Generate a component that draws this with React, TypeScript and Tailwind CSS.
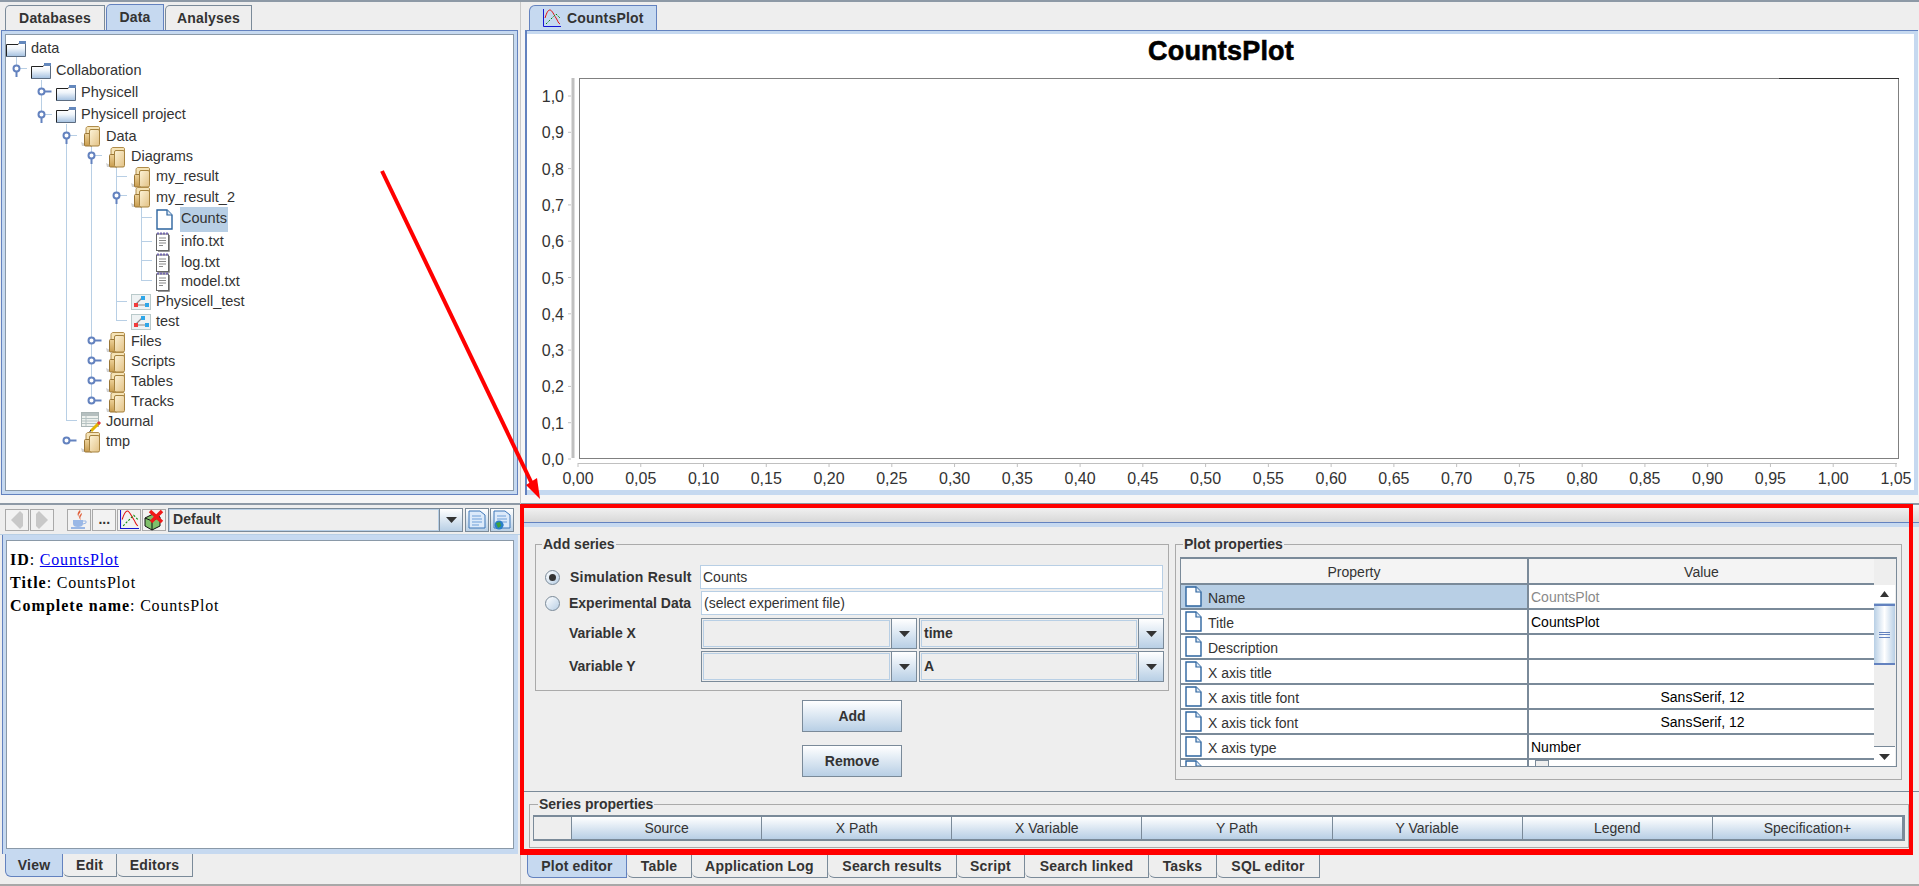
import { ReactNode } from "react";

// Metal Ocean colours: #6382bf #7a8a99 #b8cfe5 #c6d9f0 #eeeeee
const FolderBlue = () => (
  <svg width="20" height="16" viewBox="0 0 20 16">
    <defs>
      <linearGradient id="fb" x1="0" y1="0" x2="0" y2="1">
        <stop offset="0" stopColor="#ffffff" />
        <stop offset="0.35" stopColor="#eef4fa" />
        <stop offset="1" stopColor="#a3c0e0" />
      </linearGradient>
    </defs>
    <rect x="0.5" y="3.5" width="19" height="12" fill="url(#fb)" />
    <path d="M0.5 15.5V3.5H12L14 1.5" fill="none" stroke="#222" strokeWidth="1" />
    <rect x="13" y="0" width="7" height="3" fill="#6488bd" />
    <path d="M0 15.5H19.5V3" fill="none" stroke="#5c6c80" />
  </svg>
);

const FolderTan = () => (
  <svg width="20" height="21" viewBox="0 0 20 21">
    <defs>
      <linearGradient id="ft" x1="0" y1="0" x2="1" y2="1">
        <stop offset="0" stopColor="#fdf3d8" />
        <stop offset="1" stopColor="#e2c184" />
      </linearGradient>
      <linearGradient id="ft2" x1="0" y1="0" x2="0" y2="1">
        <stop offset="0" stopColor="#edd29a" />
        <stop offset="1" stopColor="#c89c4e" />
      </linearGradient>
    </defs>
    <path d="M0 16L4 18V20H1Z" fill="#cfcfcf" />
    <path d="M5 8V2.5C5 1.5 6 0.5 7 0.5H17C18 0.5 18.5 1 18.5 2V18" fill="#f5e3b6" stroke="#b08c4a" />
    <rect x="3.5" y="7.5" width="8" height="12.5" rx="1" fill="url(#ft2)" stroke="#9a7636" />
    <rect x="8.5" y="3.5" width="10" height="16.5" rx="1.5" fill="url(#ft)" stroke="#a5823f" />
  </svg>
);

const DocIcon = () => (
  <svg width="17" height="21" viewBox="0 0 17 21">
    <path d="M1 1H11L16 6V20H1Z" fill="#fff" stroke="#2d649f" strokeWidth="1.4" />
    <path d="M11 1V6H16" fill="#dfe9f4" stroke="#2d649f" strokeWidth="1.2" />
  </svg>
);

const NoteIcon = () => (
  <svg width="14" height="20" viewBox="0 0 14 20">
    <rect x="0.5" y="2" width="12" height="16.5" fill="#fff" stroke="#666" />
    <path d="M13.5 3V19.5H2" fill="none" stroke="#999" />
    <path d="M1 1.5H12.5" stroke="#7468b0" strokeWidth="2" strokeDasharray="2 1" />
    <path d="M3 6H10M3 8.5H10M3 11H10M3 13.5H7" stroke="#888" />
  </svg>
);

const DiagramIcon = () => (
  <svg width="20" height="16" viewBox="0 0 20 16">
    <rect x="0.5" y="0.5" width="19" height="15" fill="#eef2f3" stroke="#b9cacb" />
    <path d="M5 11H15M5 10L11 4" stroke="#888" strokeWidth="1.2" />
    <rect x="3" y="9" width="4" height="4" fill="#f03c3c" />
    <rect x="10" y="2" width="4" height="4" fill="#2ea6e8" />
    <rect x="14" y="9" width="4" height="4" fill="#2ea6e8" />
  </svg>
);

const JournalIcon = () => (
  <svg width="21" height="21" viewBox="0 0 21 21">
    <rect x="0.5" y="0.5" width="17" height="14" fill="#eef1ee" stroke="#aab5b5" />
    <rect x="1" y="1" width="16" height="3" fill="#b5bfbf" />
    <path d="M1 6.5H17M1 9H17M1 11.5H17M5 4V14" stroke="#b5c2c2" />
    <path d="M10 19L18 11" stroke="#e2b400" strokeWidth="3" />
    <path d="M17 12L19 10" stroke="#e04040" strokeWidth="3" />
    <path d="M8 21L10 18" stroke="#222" strokeWidth="1" />
  </svg>
);

const PlotIcon = ({ size = 18 }: { size?: number }) => (
  <svg width={size} height={size} viewBox="0 0 18 18">
    <path d="M0.5 0V17.5H18" fill="none" stroke="#1414d2" strokeWidth="1" />
    <path d="M2 9C4 3 5 1 7 1S11 6 13 9 15 14 17 15" fill="none" stroke="#e01010" strokeWidth="1" />
    <path d="M3 15L13 5L17 9" fill="none" stroke="#0a8a0a" strokeWidth="1" strokeDasharray="2 1.5" />
  </svg>
);

const JavaIcon = () => (
  <svg width="20" height="20" viewBox="0 0 20 20">
    <path d="M11 0C13 3 8 4 10 7C8 5 8 3 11 0ZM13 3C13 6 10 7 12 10C9 8 10 5 13 3Z" fill="#e0603a" />
    <path d="M4 10H14V14C14 16 12 17 9 17S4 16 4 14Z" fill="#9ab8e6" />
    <path d="M14 11H17V13L14 14" fill="none" stroke="#9ab8e6" />
    <path d="M2 18H16" stroke="#9ab8e6" strokeWidth="2" />
  </svg>
);

const CubeIcon = () => (
  <svg width="22" height="22" viewBox="0 0 22 22">
    <path d="M2 9L10 5L17 8V17L9 21L2 17Z" fill="#7fc06a" stroke="#111" />
    <path d="M2 9L9 12V21M9 12L17 8" fill="none" stroke="#111" />
    <path d="M7 2L19 13M19 2L8 13" stroke="#f01818" strokeWidth="3.5" />
  </svg>
);

const PageIcon = ({ globe }: { globe?: boolean }) => (
  <svg width="18" height="20" viewBox="0 0 18 20">
    <path d="M1 1H12L17 5V18H1Z" fill="#dceafa" stroke="#3d76b8" />
    <path d="M4 6H13M4 9H14M4 12H14M4 15H11" stroke="#6f9fd8" />
    {globe && <circle cx="6" cy="15" r="4.5" fill="#2a7fc9" />}
    {globe && <path d="M3 13L7 12L8 16L5 18Z" fill="#3da23d" />}
  </svg>
);

const Arrow = () => (
  <svg width="11" height="6" viewBox="0 0 11 6">
    <path d="M0 0H11L5.5 6Z" fill="#333" />
  </svg>
);

type RowData = { label: string; depth: number; h: number; icon: ReactNode; selected?: boolean };

const treeRows: RowData[] = [
  { label: "data", depth: 0, h: 20, icon: <FolderBlue /> },
  { label: "Collaboration", depth: 1, h: 23, icon: <FolderBlue /> },
  { label: "Physicell", depth: 2, h: 22, icon: <FolderBlue /> },
  { label: "Physicell project", depth: 2, h: 22, icon: <FolderBlue /> },
  { label: "Data", depth: 3, h: 21, icon: <FolderTan /> },
  { label: "Diagrams", depth: 4, h: 20, icon: <FolderTan /> },
  { label: "my_result", depth: 5, h: 20, icon: <FolderTan /> },
  { label: "my_result_2", depth: 5, h: 21, icon: <FolderTan /> },
  { label: "Counts", depth: 6, h: 22, icon: <DocIcon />, selected: true },
  { label: "info.txt", depth: 6, h: 23, icon: <NoteIcon /> },
  { label: "log.txt", depth: 6, h: 19, icon: <NoteIcon /> },
  { label: "model.txt", depth: 6, h: 20, icon: <NoteIcon /> },
  { label: "Physicell_test", depth: 5, h: 20, icon: <DiagramIcon /> },
  { label: "test", depth: 5, h: 20, icon: <DiagramIcon /> },
  { label: "Files", depth: 4, h: 20, icon: <FolderTan /> },
  { label: "Scripts", depth: 4, h: 20, icon: <FolderTan /> },
  { label: "Tables", depth: 4, h: 20, icon: <FolderTan /> },
  { label: "Tracks", depth: 4, h: 20, icon: <FolderTan /> },
  { label: "Journal", depth: 3, h: 20, icon: <JournalIcon /> },
  { label: "tmp", depth: 3, h: 20, icon: <FolderTan /> },
];

// connector drawing behind the tree, coordinates are page pixels
const TreeLines = () => {
  const vertical = [
    [16, 57, 68],
    [41, 80, 114],
    [66, 124, 421],
    [91, 146, 401],
    [116, 166, 321],
    [141, 205, 281],
  ];
  const horizontal = [
    [16, 27, 68],
    [41, 52, 114],
    [66, 77, 135],
    [91, 102, 155],
    [116, 127, 176],
    [116, 127, 195],
    [141, 152, 217],
    [141, 152, 241],
    [141, 152, 260],
    [141, 152, 280],
    [116, 127, 301],
    [116, 127, 320],
    [66, 77, 420],
  ];
  const open = [
    [16, 68],
    [41, 114],
    [66, 135],
    [91, 155],
    [116, 195],
  ];
  const closed = [
    [41, 91],
    [91, 340],
    [91, 360],
    [91, 380],
    [91, 400],
    [66, 440],
  ];
  return (
    <svg className="absolute top-0 left-0" width="506" height="456" viewBox="6 35 506 456">
      {vertical.map(([x, a, b]) => (
        <path key={`${x}-${a}`} d={`M${x + 0.5} ${a}V${b}`} stroke="#b8cfe5" />
      ))}
      {horizontal.map(([a, b, y]) => (
        <path key={`${a}-${y}`} d={`M${a} ${y + 0.5}H${b}`} stroke="#b8cfe5" />
      ))}
      {open.map(([x, y]) => (
        <g key={`o${x}-${y}`}>
          <path d={`M${x + 0.5} ${y}v9`} stroke="#6382bf" strokeWidth="2" />
          <circle cx={x + 0.5} cy={y + 0.5} r="3" fill="#fff" stroke="#6382bf" strokeWidth="2" />
        </g>
      ))}
      {closed.map(([x, y]) => (
        <g key={`c${x}-${y}`}>
          <path d={`M${x + 0.5} ${y + 0.5}h10`} stroke="#6382bf" strokeWidth="2" />
          <circle cx={x + 0.5} cy={y + 0.5} r="3" fill="#fff" stroke="#6382bf" strokeWidth="2" />
        </g>
      ))}
    </svg>
  );
};

const TreeRow = ({ row }: { row: RowData }) => (
  <div className="flex items-center" style={{ height: row.h, paddingLeft: row.depth * 25 }}>
    <div className="w-[25px] h-full flex items-center shrink-0">{row.icon}</div>
    <span
      className={
        row.selected
          ? "h-[25px] -ml-[1px] px-[1px] flex items-center bg-[#b8cfe5] text-[14.5px] text-[#333]"
          : "text-[14.5px] text-[#333]"
      }
    >
      {row.label}
    </span>
  </div>
);

const TopTab = ({ label, width, active }: { label: string; width: string; active?: boolean }) => (
  <div
    className={`${width} flex items-center justify-center border-t border-r border-l rounded-tl-[5px] font-bold text-[14px] tracking-[0.2px] text-[#333] ${
      active ? "h-[26px] bg-[#c6d9f0] border-[#6382bf]" : "h-[25px] bg-[#eeeeee] border-[#7a8a99]"
    }`}
  >
    {label}
  </div>
);

const BottomTab = ({ label, width, active }: { label: string; width: string; active?: boolean }) => (
  <div
    className={`${width} h-[23px] flex items-center justify-center border-b border-r rounded-bl-[6px] font-bold text-[14px] tracking-[0.2px] text-[#333] ${
      active ? "bg-[#c6d9f0] border-[#6382bf] border-l" : "bg-[#eeeeee] border-[#7a8a99]"
    }`}
  >
    {label}
  </div>
);

const ToolButton = ({ children, w = "w-[24px]" }: { children?: ReactNode; w?: string }) => (
  <div className={`${w} h-[22px] flex items-center justify-center border border-[#a9a9a9] bg-[#f2f2f2] shrink-0`}>
    {children}
  </div>
);

const Combo = ({ value, width, arrow = "w-[25px]" }: { value: string; width: string; arrow?: string }) => (
  <div className={`${width} h-[31px] flex border border-[#7a8a99] bg-[#eeeeee]`}>
    <div className="flex-1 m-[1px] border border-[#b8cfe5] flex items-center pl-[2px] font-bold text-[14px] text-[#333]">
      {value}
    </div>
    <div className={`${arrow} flex items-center justify-center border-l border-[#7a8a99] bg-gradient-to-b from-white to-[#b8cfe5]`}>
      <Arrow />
    </div>
  </div>
);

const Radio = ({ on }: { on?: boolean }) => (
  <div className="w-[15px] h-[15px] rounded-full border border-[#7a8a99] bg-gradient-to-br from-white to-[#b8cfe5] flex items-center justify-center shrink-0">
    {on && <div className="w-[7px] h-[7px] rounded-full bg-[#333]" />}
  </div>
);

const GradButton = ({ label }: { label: string }) => (
  <div className="w-[100px] h-[32px] flex items-center justify-center border border-[#7a8a99] bg-gradient-to-b from-white to-[#b8cfe5] font-bold text-[14px] text-[#333]">
    {label}
  </div>
);

const TextField = ({ value, width }: { value: string; width: string }) => (
  <div className={`${width} h-[24px] flex items-center pl-[2px] border border-[#b8cfe5] bg-white text-[14px] text-[#333]`}>
    {value}
  </div>
);

const propRows: [string, string, string][] = [
  ["Name", "CountsPlot", "text-[#8a8a8a]"],
  ["Title", "CountsPlot", "text-black"],
  ["Description", "", ""],
  ["X axis title", "", ""],
  ["X axis title font", "SansSerif, 12", "text-black text-center"],
  ["X axis tick font", "SansSerif, 12", "text-black text-center"],
  ["X axis type", "Number", "text-black"],
];

const Chart = () => {
  const yTicks = [1, 0.9, 0.8, 0.7, 0.6, 0.5, 0.4, 0.3, 0.2, 0.1, 0];
  const xTicks = Array.from({ length: 22 }, (_, i) => i);
  return (
    <svg width="1386" height="456" viewBox="528 34 1386 456" className="block">
      <text x="1222" y="60" textAnchor="middle" fontFamily="Liberation Sans" fontWeight="bold" fontSize="27" letterSpacing="0.2" stroke="#000" strokeWidth="0.6" fill="#000">
        CountsPlot
      </text>
      <rect x="580.5" y="78.5" width="1319" height="380" fill="#fff" stroke="#808080" />
      <path d="M1780 78.5H1900" stroke="#333" />
      <path d="M574 78V458" stroke="#c0c0c0" strokeWidth="3" />
      <path d="M579 463.5H1898" stroke="#c0c0c0" />
      {yTicks.map((v, i) => {
        const y = 96 + i * 36.3;
        return (
          <g key={v}>
            <path d={`M569 ${y}H572`} stroke="#c0c0c0" />
            <text x="565" y={y + 6} textAnchor="end" fontFamily="Liberation Sans" fontSize="16" fill="#333">
              {v.toFixed(1).replace(".", ",")}
            </text>
          </g>
        );
      })}
      {xTicks.map((i) => {
        const x = 579 + i * 62.76;
        return (
          <g key={i}>
            <path d={`M${x} 463V467`} stroke="#c0c0c0" />
            <text x={x} y="484" textAnchor="middle" fontFamily="Liberation Sans" fontSize="16" fill="#333">
              {(i * 0.05).toFixed(2).replace(".", ",")}
            </text>
          </g>
        );
      })}
    </svg>
  );
};

export default function App() {
  return (
    <div className="relative w-[1919px] h-[886px] overflow-hidden bg-[#eeeeee] font-['Liberation_Sans',sans-serif]">
      <div className="h-[2px] bg-[#8d99a6]" />
      <div className="flex h-[882px]">
        {/* left column */}
        <div className="w-[521px] shrink-0 flex flex-col border-r border-[#c8c8c8]">
          <div className="h-[28px] flex items-end pl-[5px] gap-[1px]">
            <TopTab label="Databases" width="w-[100px]" />
            <TopTab label="Data" width="w-[58px]" active />
            <TopTab label="Analyses" width="w-[87px]" />
          </div>
          <div className="h-[465px] ml-[1px] mr-[2px] border border-[#6382bf] bg-[#c6d9f0] p-[3px]">
            <div className="relative h-full bg-white border border-[#8a99a8] pt-[4px]">
              <TreeLines />
              <div className="relative">
                {treeRows.map((row) => (
                  <TreeRow key={row.label + row.depth} row={row} />
                ))}
              </div>
            </div>
          </div>
          <div className="h-[8px] bg-[#f6f6f6]" />
          <div className="h-[2px] bg-[#8d99a6]" />
          <div className="h-[30px] flex items-center pl-[5px] pr-[6px] border-b border-[#b8cfe5]">
            <ToolButton>
              <svg width="14" height="18" viewBox="0 0 14 18">
                <path d="M10 0L1 9L10 18L13 15V3Z" fill="#c8c8c8" />
              </svg>
            </ToolButton>
            <div className="w-[1px]" />
            <ToolButton>
              <svg width="14" height="18" viewBox="0 0 14 18">
                <path d="M4 0L13 9L4 18L1 15V3Z" fill="#c8c8c8" />
              </svg>
            </ToolButton>
            <div className="w-[14px]" />
            <ToolButton>
              <JavaIcon />
            </ToolButton>
            <div className="w-[1px]" />
            <ToolButton>
              <span className="font-bold text-[14px] text-[#333]">...</span>
            </ToolButton>
            <div className="w-[1px]" />
            <ToolButton>
              <PlotIcon size={19} />
            </ToolButton>
            <div className="w-[1px]" />
            <ToolButton>
              <CubeIcon />
            </ToolButton>
            <div className="w-[2px]" />
            <div className="w-[295px] h-[24px] flex border border-[#7a8a99] shrink-0">
              <div className="flex-1 border border-[#b8cfe5] flex items-center pl-[3px] font-bold text-[14px] text-[#333]">
                Default
              </div>
              <div className="w-[23px] flex items-center justify-center border-l border-[#7a8a99] bg-gradient-to-b from-white to-[#b8cfe5]">
                <Arrow />
              </div>
            </div>
            <div className="w-[2px]" />
            <div className="w-[24px] h-[24px] flex items-center justify-center border border-[#7a8a99] bg-gradient-to-b from-white to-[#b8cfe5] shrink-0">
              <PageIcon />
            </div>
            <div className="w-[1px]" />
            <div className="w-[24px] h-[24px] flex items-center justify-center border border-[#7a8a99] bg-gradient-to-b from-white to-[#b8cfe5] shrink-0">
              <PageIcon globe />
            </div>
          </div>
          <div className="h-[319px] ml-[2px] mr-[2px] border-l border-[#6382bf] bg-[#c6d9f0] pt-[5px] pb-[5px] pl-[3px] pr-[4px]">
            <div className="h-full bg-white border border-[#8a99a8] pt-[7px] pl-[3px] font-['Liberation_Serif',serif] text-[16px] leading-[23px] tracking-[0.8px] text-black">
              <div>
                <b className="tracking-[1px]">ID</b>: <span className="text-[#0000ee] underline">CountsPlot</span>
              </div>
              <div>
                <b className="tracking-[1px]">Title</b>: CountsPlot
              </div>
              <div>
                <b className="tracking-[1px]">Complete name</b>: CountsPlot
              </div>
            </div>
          </div>
          <div className="flex pl-[5px]">
            <BottomTab label="View" width="w-[58px]" active />
            <BottomTab label="Edit" width="w-[54px]" />
            <BottomTab label="Editors" width="w-[76px]" />
          </div>
        </div>

        {/* right column */}
        <div className="flex-1 min-w-0 flex flex-col bg-[#f6f6f6]">
          <div className="h-[28px] flex items-end pl-[8px] bg-[#eeeeee]">
            <div className="w-[128px] h-[25px] flex items-center gap-[6px] pl-[13px] border-t border-r border-l border-[#6382bf] rounded-tl-[6px] bg-[#c6d9f0] font-bold text-[14px] tracking-[0.2px] text-[#333]">
              <PlotIcon />
              CountsPlot
            </div>
          </div>
          <div className="h-[465px] ml-[4px] mr-[1px] border-l-[2px] border-t border-[#6382bf] bg-[#c6d9f0] pt-[3px] pb-[5px] pr-[4px]">
            <div className="h-full bg-white">
              <Chart />
            </div>
          </div>
          <div className="h-[8px]" />
          <div className="h-[2px] bg-[#8d99a6]" />
          <div className="h-[18px] bg-gradient-to-b from-[#f6f6f6] to-[#d8d8d8] border-b border-[#6382bf]" />
          <div className="h-[4px] bg-[#c6d9f0]" />
          {/* plot editor */}
          <div className="h-[328px] bg-[#eeeeee] pt-[9px] pl-[14px] pr-[6px] flex flex-col">
            <div className="flex h-[244px]">
              <div className="w-[634px] shrink-0 flex flex-col items-center">
                <fieldset className="w-full h-[155px] border border-[#aaaaaa] pl-[9px]">
                  <legend className="px-[1px] -ml-[3px] font-bold text-[14px] leading-[16px] text-[#333]">Add series</legend>
                  <div className="mt-[13px] flex items-center h-[24px]">
                    <Radio on />
                    <span className="ml-[10px] w-[130px] font-bold text-[14px] tracking-[0.2px] whitespace-nowrap text-[#333]">Simulation Result</span>
                    <TextField value="Counts" width="w-[463px]" />
                  </div>
                  <div className="mt-[2px] flex items-center h-[24px]">
                    <Radio />
                    <span className="ml-[9px] w-[132px] font-bold text-[14px] whitespace-nowrap text-[#333]">Experimental Data</span>
                    <TextField value="(select experiment file)" width="w-[462px]" />
                  </div>
                  <div className="mt-[3px] flex items-center">
                    <span className="ml-[24px] w-[132px] font-bold text-[14px] text-[#333]">Variable X</span>
                    <Combo value="" width="w-[216px]" />
                    <div className="w-[2px]" />
                    <Combo value="time" width="w-[245px]" />
                  </div>
                  <div className="mt-[2px] flex items-center">
                    <span className="ml-[24px] w-[132px] font-bold text-[14px] text-[#333]">Variable Y</span>
                    <Combo value="" width="w-[216px]" />
                    <div className="w-[2px]" />
                    <Combo value="A" width="w-[245px]" />
                  </div>
                </fieldset>
                <div className="mt-[9px]">
                  <GradButton label="Add" />
                </div>
                <div className="mt-[13px]">
                  <GradButton label="Remove" />
                </div>
              </div>
              <fieldset className="ml-[6px] w-[727px] h-[244px] border border-[#aaaaaa] px-[4px]">
                <legend className="px-[1px] ml-[3px] font-bold text-[14px] leading-[16px] text-[#333]">Plot properties</legend>
                <div className="mt-[5px] h-[210px] border-t-[2px] border-l-[1px] border-b border-r border-[#7a8a99] bg-[#eeeeee] flex overflow-hidden">
                  <div className="w-[693px] shrink-0 flex flex-col">
                    <div className="flex h-[26px] shrink-0 border-b-[2px] border-[#7a8a99]">
                      <div className="w-[348px] flex items-center justify-center pt-[3px] border-r-[2px] border-[#7a8a99] bg-[#f4f4f4] text-[14px] text-[#333]">Property</div>
                      <div className="flex-1 flex items-center justify-center pt-[3px] bg-[#f4f4f4] text-[14px] text-[#333]">Value</div>
                    </div>
                    {propRows.map(([name, value, cls], i) => (
                      <div key={name} className="flex shrink-0 h-[25px] border-b-[2px] border-[#7a8a99]">
                        <div className={`w-[348px] flex items-center gap-[6px] pl-[4px] border-r-[2px] border-[#7a8a99] ${i === 0 ? "bg-[#b8cfe5]" : "bg-white"}`}>
                          <DocIcon />
                          <span className="pt-[3px] text-[14px] text-[#333]">{name}</span>
                        </div>
                        <div className={`flex-1 flex items-center pl-[2px] pt-[2px] bg-white text-[14px] ${cls}`}>
                          <span className="w-full">{value}</span>
                        </div>
                      </div>
                    ))}
                    <div className="flex flex-1 min-h-0">
                      <div className="w-[348px] pl-[4px] bg-white border-r-[2px] border-[#7a8a99] overflow-hidden">
                        <DocIcon />
                      </div>
                      <div className="flex-1 bg-white pl-[6px] overflow-hidden">
                        <div className="w-[14px] h-[14px] border border-[#7a8a99] bg-[#eeeeee]" />
                      </div>
                    </div>
                  </div>
                  <div className="w-[21px] flex flex-col pt-[26px]">
                    <div className="h-[19px] flex items-center justify-center bg-white border-b border-[#b8cfe5]">
                      <svg width="9" height="6" viewBox="0 0 9 6">
                        <path d="M0 6H9L4.5 0Z" fill="#333" />
                      </svg>
                    </div>
                    <div className="h-[61px] flex items-center justify-center border-t-[2px] border-b-[2px] border-[#6382bf] bg-gradient-to-r from-[#b8cfe5] via-white to-[#b8cfe5]">
                      <div className="w-[11px] h-[6px] border-t border-b border-[#6382bf] flex items-center">
                        <div className="w-full h-[1px] bg-[#6382bf]" />
                      </div>
                    </div>
                    <div className="flex-1 bg-[#eeeeee]" />
                    <div className="h-[20px] flex items-center justify-center bg-white border-t border-[#7a8a99]">
                      <Arrow />
                    </div>
                  </div>
                </div>
              </fieldset>
            </div>
            <div className="-ml-[13px] mt-[11px] -mr-[6px] h-[1px] bg-[#7a8a99]" />
            <fieldset className="-ml-[6px] mt-[4px] w-[1380px] h-[52px] border border-[#aaaaaa] px-[3px] shrink-0">
              <legend className="px-[1px] ml-[5px] font-bold text-[14px] leading-[16px] text-[#333]">Series properties</legend>
              <div className="mt-[3px] h-[26px] flex border-t-[2px] border-b-[2px] border-r-[2px] border-[#7a8a99] text-[14px] text-[#333]">
                <div className="w-[39px] bg-[#eeeeee] border-l border-r border-[#7a8a99]" />
                {["Source", "X Path", "X Variable", "Y Path", "Y Variable", "Legend", "Specification+"].map((h) => (
                  <div key={h} className="flex-1 flex items-center justify-center border-r border-[#7a8a99] bg-gradient-to-b from-white to-[#b8cfe5]">
                    {h}
                  </div>
                ))}
              </div>
            </fieldset>
          </div>
          <div className="flex pl-[6px] bg-[#eeeeee]">
            <BottomTab label="Plot editor" width="w-[100px]" active />
            <BottomTab label="Table" width="w-[65px]" />
            <BottomTab label="Application Log" width="w-[136px]" />
            <BottomTab label="Search results" width="w-[129px]" />
            <BottomTab label="Script" width="w-[68px]" />
            <BottomTab label="Search linked" width="w-[124px]" />
            <BottomTab label="Tasks" width="w-[68px]" />
            <BottomTab label="SQL editor" width="w-[103px]" />
          </div>
          <div className="flex-1 bg-[#eeeeee]" />
        </div>
      </div>
      <div className="h-[2px] bg-[#a8a8a8]" />

      {/* red annotation over the screenshot */}
      <div className="absolute left-[520px] top-[504px] w-[1393px] h-[351px] border-[4px] border-b-[6px] border-[#ff0000]" />
      <svg className="absolute top-0 left-0 pointer-events-none" width="1919" height="886">
        <path d="M382 171L534 488" stroke="#ff0000" strokeWidth="4" />
        <path d="M540 499L526 485L537 478Z" fill="#ff0000" />
      </svg>
    </div>
  );
}
